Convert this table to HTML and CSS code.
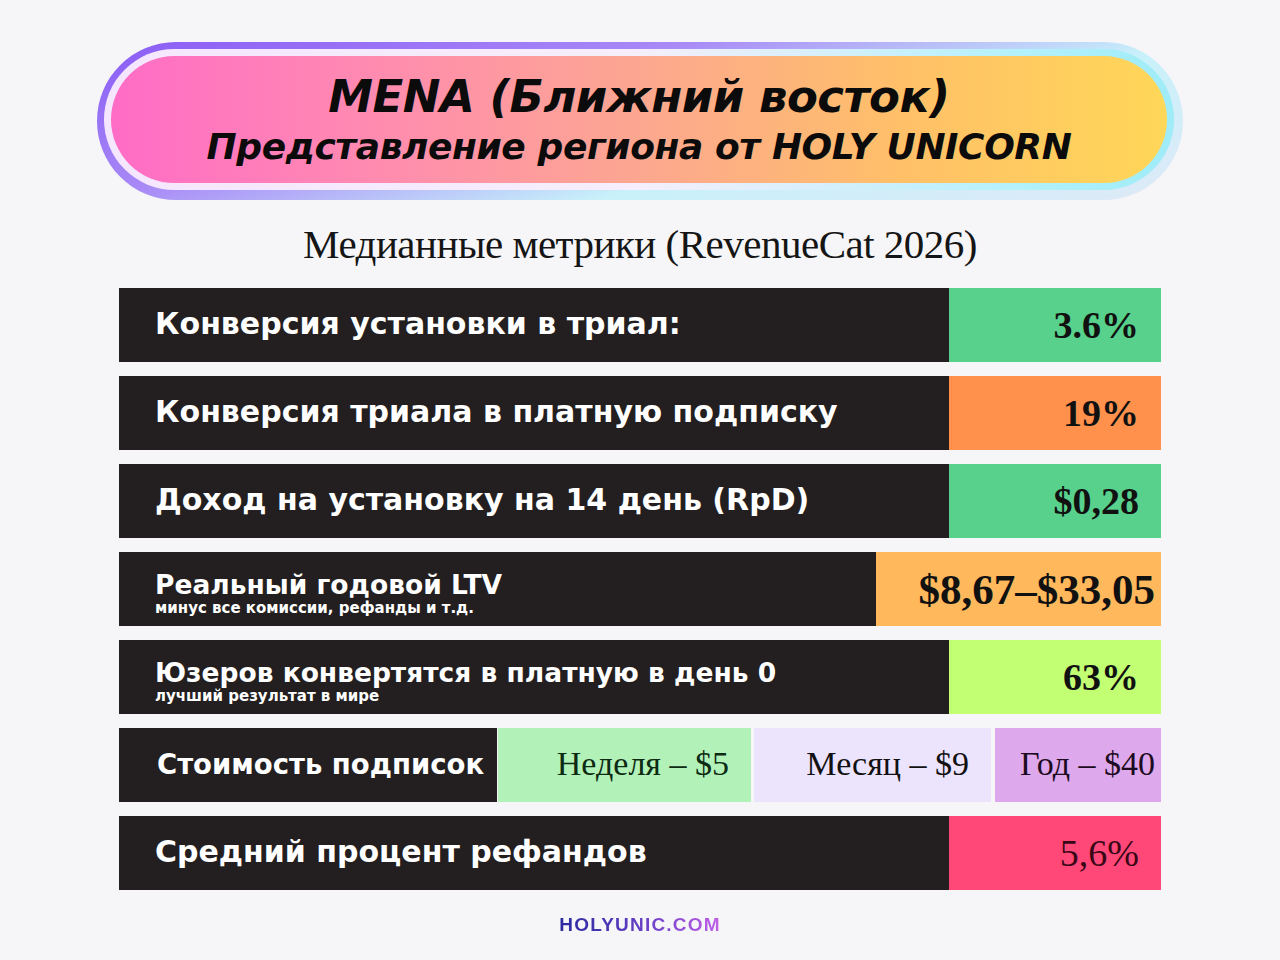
FILE: index.html
```html
<!DOCTYPE html>
<html lang="ru">
<head>
<meta charset="utf-8">
<title>MENA</title>
<link rel="stylesheet" href="styles.css">
</head>
<body>
<div class="page">
  <header class="hero-wrap">
    <div class="hero">
      <h1 class="hero-title">MENA (Ближний восток)</h1>
      <p class="hero-sub">Представление региона от HOLY UNICORN</p>
    </div>
  </header>

  <h2 class="subtitle">Медианные метрики (RevenueCat 2026)</h2>

  <section class="rows">
    <div class="row">
      <div class="label"><span class="main">Конверсия установки в триал:</span></div>
      <div class="value green bold">3.6%</div>
    </div>
    <div class="row">
      <div class="label"><span class="main">Конверсия триала в платную подписку</span></div>
      <div class="value orange bold">19%</div>
    </div>
    <div class="row">
      <div class="label"><span class="main">Доход на установку на 14 день (RpD)</span></div>
      <div class="value green bold">$0,28</div>
    </div>
    <div class="row">
      <div class="label two"><span class="main">Реальный годовой LTV</span><span class="sub">минус все комиссии, рефанды и т.д.</span></div>
      <div class="value amber bold wide">$8,67–$33,05</div>
    </div>
    <div class="row">
      <div class="label two"><span class="main">Юзеров конвертятся в платную в день 0</span><span class="sub">лучший результат в мире</span></div>
      <div class="value lime bold">63%</div>
    </div>
    <div class="row split">
      <div class="label short"><span class="main">Стоимость подписок</span></div>
      <div class="price week">Неделя – $5</div>
      <div class="price month">Месяц – $9</div>
      <div class="price year">Год – $40</div>
    </div>
    <div class="row">
      <div class="label"><span class="main">Средний процент рефандов</span></div>
      <div class="value pink">5,6%</div>
    </div>
  </section>

  <footer class="footer"><span class="brand">HOLYUNIC.COM</span></footer>
</div>
</body>
</html>
```

FILE: styles.css
```css
* { box-sizing: border-box; margin: 0; padding: 0; }

html, body {
  width: 1280px;
  height: 960px;
  background: #f6f6f8;
  overflow: hidden;
}

.page {
  display: flex;
  flex-direction: column;
  align-items: center;
  padding-top: 42px;
}

.hero-wrap {
  width: 1086px;
  height: 158px;
  border-radius: 80px;
  background: linear-gradient(165deg, #8a5cf5 0%, #a889f6 35%, #c8f1fa 65%, #dfe9f7 100%);
  padding: 7px 9px 10px 7px;
}

.hero {
  height: 100%;
  border-radius: 74px;
  border: 7px solid transparent;
  background:
    linear-gradient(90deg, #ff6cc6 0%, #ff8bb0 25%, #fca790 50%, #ffc068 75%, #ffd758 100%) padding-box,
    linear-gradient(90deg, #f5e6ff 0%, #f6eefc 50%, #b4f1fb 85%, #9eecf8 100%) border-box;
  display: flex;
  flex-direction: column;
  align-items: center;
  justify-content: center;
  font-family: "DejaVu Sans", "Liberation Sans", sans-serif;
  font-style: italic;
  font-weight: 700;
  color: #0b0b0b;
  padding-top: 2px;
}

.hero-title {
  font-size: 45px;
  line-height: 52px;
  font-weight: 700;
  letter-spacing: -0.5px;
  white-space: nowrap;
}

.hero-sub {
  font-size: 36px;
  line-height: 46px;
  letter-spacing: -0.4px;
  white-space: nowrap;
  margin-top: 1px;
}

.subtitle {
  margin-top: 20px;
  font-family: "Liberation Serif", "Times New Roman", serif;
  font-weight: 400;
  font-size: 41px;
  line-height: 48px;
  color: #151515;
  letter-spacing: -0.5px;
}

.rows {
  margin-top: 20px;
  width: 1042px;
  display: flex;
  flex-direction: column;
  gap: 14px;
}

.row {
  height: 74px;
  display: flex;
}

.label {
  flex: 1;
  background: #231f20;
  color: #ffffff;
  font-family: "DejaVu Sans", "Liberation Sans", sans-serif;
  font-weight: 700;
  display: flex;
  flex-direction: column;
  justify-content: center;
  padding-left: 36px;
  padding-bottom: 2px;
  white-space: nowrap;
}

.main {
  font-size: 30px;
  line-height: 32px;
}

.label.two {
  padding-bottom: 0;
  padding-top: 8px;
}

.label.two .main {
  font-size: 26.5px;
  line-height: 28px;
}

.sub {
  font-size: 15px;
  line-height: 16px;
  margin-top: 1px;
}

.value {
  width: 212px;
  display: flex;
  align-items: center;
  justify-content: flex-end;
  padding-right: 22px;
  font-family: "Liberation Serif", "Times New Roman", serif;
  font-size: 38px;
  color: #111111;
}

.value.bold { font-weight: 700; }
.value.wide { width: 285px; padding-right: 6px; font-size: 43px; }

.green { background: #57d18b; }
.orange { background: #ff914d; }
.amber { background: #ffb85b; }
.lime { background: #c2ff72; }
.pink { background: #ff4878; color: #3a0716; }

.split .label.short {
  flex: 0 0 378px;
  padding-left: 38px;
}

.split .label.short .main {
  font-size: 27.5px;
}

.price {
  display: flex;
  align-items: center;
  justify-content: flex-end;
  font-family: "Liberation Serif", "Times New Roman", serif;
  font-size: 34px;
  color: #111111;
  padding-bottom: 2px;
}

.week { width: 253px; margin-left: 1px; background: #b2f2b8; padding-right: 22px; color: #0d2a12; }
.month { width: 237px; margin-left: 3px; background: #ece3fd; padding-right: 22px; }
.year { width: 166px; margin-left: 4px; background: #dda8ec; padding-right: 6px; color: #1d0b22; }

.footer {
  margin-top: 24px;
}

.brand {
  font-family: "Liberation Sans", Arial, sans-serif;
  font-weight: 700;
  font-size: 19px;
  letter-spacing: 1.2px;
  background: linear-gradient(90deg, #2a2aa0 0%, #5a3bc0 45%, #c15fe8 100%);
  -webkit-background-clip: text;
  background-clip: text;
  color: transparent;
}
```
